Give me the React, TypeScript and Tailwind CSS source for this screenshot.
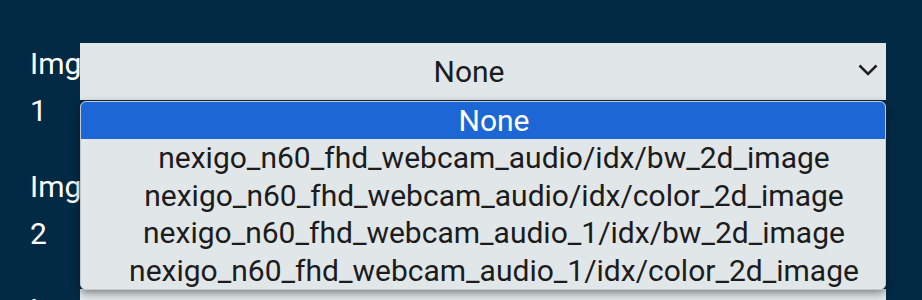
const options = [
  'None',
  'nexigo_n60_fhd_webcam_audio/idx/bw_2d_image',
  'nexigo_n60_fhd_webcam_audio/idx/color_2d_image',
  'nexigo_n60_fhd_webcam_audio_1/idx/bw_2d_image',
  'nexigo_n60_fhd_webcam_audio_1/idx/color_2d_image',
];

const ImgRow = ({ n, open }: { n: number; open?: boolean }) => (
  <div className="flex">
    <div className="w-[50px] shrink-0 overflow-hidden whitespace-nowrap text-[30px] leading-[47px] text-white">
      Img
      <br />
      {n}
    </div>
    <div className="relative mt-[3px] w-[806px]">
      <div className="flex h-[57px] items-center bg-[#e1e6e9] pr-[28px] text-[30px] text-[#1c1c1c]">
        <span className="flex-1 text-center">None</span>
        <svg className="absolute right-[8px] top-[21px]" width="20" height="13" viewBox="0 0 20 13" fill="none">
          <polyline points="1.5,1.5 10,10 18.5,1.5" stroke="#222" strokeWidth="2.6" />
        </svg>
      </div>

      {open && (
        <div className="absolute left-0 top-[58px] z-10 w-[806px] overflow-hidden rounded-[6px] border border-[#c4c9cc] bg-[#e1e6e9] pl-[22px] shadow-[0_3px_8px_rgba(0,0,0,0.45)]">
          {options.map((opt, i) => (
            <div
              key={opt}
              className={
                i === 0
                  ? '-ml-[22px] bg-[#1c67d5] pl-[22px] text-center text-[30px] leading-[37px] text-white'
                  : 'text-center text-[30px] leading-[37.5px] text-[#1c1c1c]'
              }
            >
              {opt}
            </div>
          ))}
        </div>
      )}
    </div>
  </div>
);

export default function App() {
  return (
    <div
      className="flex h-[300px] w-full flex-col gap-[29px] overflow-hidden bg-[#032a44] pl-[30px] pt-[40px]"
      style={{ fontFamily: 'Roboto, sans-serif' }}
    >
      <ImgRow n={1} open />
      <ImgRow n={2} />
      <ImgRow n={3} />
    </div>
  );
}
